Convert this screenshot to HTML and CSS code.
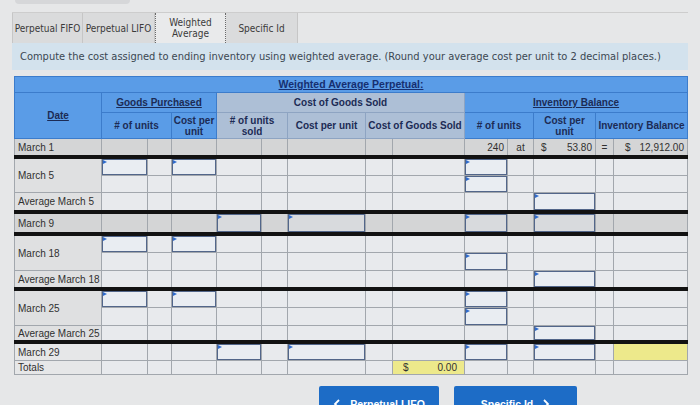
FILE: index.html
```html
<!DOCTYPE html>
<html>
<head>
<meta charset="utf-8">
<link rel="stylesheet" href="styles.css">
</head>
<body>
<div class="page">
  <div class="topfade"></div>
  <div class="tabs">
    <div class="tab">Perpetual FIFO</div>
    <div class="tab">Perpetual LIFO</div>
    <div class="tab active">Weighted<br>Average</div>
    <div class="tab">Specific Id</div>
  </div>
  <div class="instr">Compute the cost assigned to ending inventory using weighted average. (Round your average cost per unit to 2 decimal places.)</div>

  <table class="grid">
    <colgroup>
      <col class="w87"><col class="w46"><col class="w24"><col class="w45"><col class="w45"><col class="w26"><col class="w78"><col class="w27"><col class="w72"><col class="w43"><col class="w26"><col class="w62"><col class="w18"><col class="w74">
    </colgroup>
    <thead>
      <tr class="h15"><th colspan="14" class="title"><u>Weighted Average Perpetual:</u></th></tr>
      <tr class="h19">
        <th rowspan="2"><u>Date</u></th>
        <th colspan="3"><u>Goods Purchased</u></th>
        <th colspan="5" class="cg">Cost of Goods Sold</th>
        <th colspan="5"><u>Inventory Balance</u></th>
      </tr>
      <tr class="h25">
        <th colspan="2"># of units</th>
        <th>Cost per<br>unit</th>
        <th colspan="2" class="cg"># of units<br>sold</th>
        <th class="cg">Cost per unit</th>
        <th colspan="2" class="cg">Cost of Goods Sold</th>
        <th colspan="2"># of units</th>
        <th>Cost per<br>unit</th>
        <th colspan="2">Inventory Balance</th>
      </tr>
    </thead>
    <tbody>
      <tr class="h16 gray sep">
        <td class="d">March 1</td>
        <td></td><td></td><td></td><td></td><td></td><td></td><td></td><td></td>
        <td class="num">240</td>
        <td class="c">at</td>
        <td><div class="m pl6"><span>$</span><span>53.80</span></div></td>
        <td class="c">=</td>
        <td><div class="m pl10"><span>$</span><span>12,912.00</span></div></td>
      </tr>

      <tr class="h16">
        <td class="d" rowspan="2">March 5</td>
        <td class="in"><div class="box"></div></td><td></td><td class="in"><div class="box"></div></td>
        <td></td><td></td><td></td><td></td><td></td>
        <td class="in"><div class="box"></div></td><td></td><td></td><td></td><td></td>
      </tr>
      <tr class="h16">
        <td></td><td></td><td></td><td></td><td></td><td></td><td></td><td></td>
        <td class="in"><div class="box"></div></td><td></td><td></td><td></td><td></td>
      </tr>
      <tr class="h17 sep">
        <td class="d">Average March 5</td>
        <td></td><td></td><td></td><td></td><td></td><td></td><td></td><td></td><td></td><td></td>
        <td class="in"><div class="box"></div></td><td></td><td></td>
      </tr>

      <tr class="h18 gray sep">
        <td class="d">March 9</td>
        <td></td><td></td><td></td>
        <td class="in"><div class="box"></div></td><td></td>
        <td class="in"><div class="box"></div></td><td></td><td></td>
        <td class="in"><div class="box"></div></td><td></td>
        <td class="in"><div class="box"></div></td><td></td><td></td>
      </tr>

      <tr class="h16">
        <td class="d" rowspan="2">March 18</td>
        <td class="in"><div class="box"></div></td><td></td><td class="in"><div class="box"></div></td>
        <td></td><td></td><td></td><td></td><td></td><td></td><td></td><td></td><td></td><td></td>
      </tr>
      <tr class="h17">
        <td></td><td></td><td></td><td></td><td></td><td></td><td></td><td></td>
        <td class="in"><div class="box"></div></td><td></td><td></td><td></td><td></td>
      </tr>
      <tr class="h16 sep">
        <td class="d">Average March 18</td>
        <td></td><td></td><td></td><td></td><td></td><td></td><td></td><td></td><td></td><td></td>
        <td class="in"><div class="box"></div></td><td></td><td></td>
      </tr>

      <tr class="h16">
        <td class="d" rowspan="2">March 25</td>
        <td class="in"><div class="box"></div></td><td></td><td class="in"><div class="box"></div></td>
        <td></td><td></td><td></td><td></td><td></td>
        <td class="in"><div class="box"></div></td><td></td><td></td><td></td><td></td>
      </tr>
      <tr class="h17">
        <td></td><td></td><td></td><td></td><td></td><td></td><td></td><td></td>
        <td class="in"><div class="box"></div></td><td></td><td></td><td></td><td></td>
      </tr>
      <tr class="h14 sep">
        <td class="d">Average March 25</td>
        <td></td><td></td><td></td><td></td><td></td><td></td><td></td><td></td><td></td><td></td>
        <td class="in"><div class="box"></div></td><td></td><td></td>
      </tr>

      <tr class="h16">
        <td class="d lite">March 29</td>
        <td></td><td></td><td></td>
        <td class="in"><div class="box"></div></td><td></td>
        <td class="in"><div class="box"></div></td><td></td><td></td>
        <td class="in"><div class="box"></div></td><td></td>
        <td class="in"><div class="box"></div></td><td></td>
        <td class="yellow"></td>
      </tr>
      <tr class="h13">
        <td class="d lite">Totals</td>
        <td></td><td></td><td></td><td></td><td></td><td></td><td></td>
        <td class="yellow"><div class="m pl8"><span>$</span><span>0.00</span></div></td>
        <td></td><td></td><td></td><td></td><td></td>
      </tr>
    </tbody>
  </table>

  <div class="btns">
    <div class="btn b1">
      <svg width="7" height="10" viewBox="0 0 7 10"><path d="M6 1 L2 5 L6 9" fill="none" stroke="#fff" stroke-width="1.8"/></svg>
      <span>Perpetual LIFO</span>
    </div>
    <div class="btn b2">
      <span>Specific Id</span>
      <svg width="7" height="10" viewBox="0 0 7 10"><path d="M1 1 L5 5 L1 9" fill="none" stroke="#fff" stroke-width="1.8"/></svg>
    </div>
  </div>
</div>
</body>
</html>
```

FILE: styles.css
```css
html, body {
  margin: 0;
  height: 100%;
  overflow: hidden;
}
body {
  background: #e6e7e8;
  font-family: "Liberation Sans", Arial, sans-serif;
}
.page {
  padding: 0 12px;
}
.topfade {
  width: 115px;
  height: 4px;
  margin-left: 3px;
  background: #d6d7d9;
  border-radius: 0 0 5px 5px;
}
.tabs {
  display: flex;
  height: 30px;
  margin-top: 8px;
  border-top: 1px solid #cdcdcd;
}
.tab {
  display: flex;
  align-items: center;
  justify-content: center;
  text-align: center;
  width: 71px;
  font-family: "DejaVu Sans Condensed", "DejaVu Sans", sans-serif;
  font-size: 10px;
  line-height: 11px;
  color: #3a3a3a;
  background: #dadbdc;
  border-right: 1px solid #c6c6c6;
  box-sizing: border-box;
}
.tab:first-child { border-left: 1px solid #c6c6c6; }
.tab:nth-child(2) { width: 72px; }
.tab.active {
  width: 71px;
  background: #e9eaeb;
  border-left: 1px dotted #6a6a6a;
  border-right: 1px dotted #6a6a6a;
}
.tab:nth-child(4) { width: 72px; }
.instr {
  display: flex;
  align-items: center;
  height: 27px;
  padding-left: 8px;
  background: #d3e2ed;
  font-family: "DejaVu Sans Condensed", "DejaVu Sans", sans-serif;
  font-size: 11px;
  color: #3b4752;
}

.grid {
  margin: 6px 0 0 2px;
  border-collapse: collapse;
  table-layout: fixed;
  width: 673px;
}
.w87 { width: 87px; } .w46 { width: 46px; } .w24 { width: 24px; } .w45 { width: 45px; }
.w26 { width: 26px; } .w78 { width: 78px; } .w27 { width: 27px; } .w72 { width: 72px; }
.w43 { width: 43px; } .w62 { width: 62px; } .w18 { width: 18px; } .w74 { width: 74px; }

th {
  padding: 0;
  background: #5a9ce7;
  border: 1px solid #3c7ccb;
  color: #1c2b55;
  font-size: 10px;
  font-weight: bold;
  line-height: 11px;
  text-align: center;
  white-space: nowrap;
  overflow: hidden;
}
th.cg { background: #adbfd6; border-color: #8ea4c2; }
th.title {
  font-size: 10.5px;
  color: #162f70;
}

td {
  padding: 0 3px;
  background: #e8eaed;
  border: 1px solid #a2a7ad;
  color: #303030;
  font-size: 10px;
  line-height: 11px;
  white-space: nowrap;
  overflow: hidden;
}
td.d { background: #dfe0e1; padding-left: 3px; }
td.d.lite { background: #e6e7e8; }
tr.gray td { background: #d4d5d6; }
tr.sep td { border-bottom: 4px solid #121212; }
td.num { text-align: right; }
td.c { text-align: center; padding: 0; }
td.in { padding: 0; }
td.yellow { background: #ede98b; }
tr.gray td.in .box { background: #d8dadd; }

.m { display: flex; justify-content: space-between; }
.pl6 { padding-left: 4px; }
.pl8 { padding-left: 7px; padding-right: 4px; }
.pl10 { padding-left: 8px; }

.box {
  box-sizing: border-box;
  border: 1px solid #52668a;
  background: #e9edf2;
}
.box::before {
  content: "";
  display: block;
  width: 0;
  height: 0;
  border-left: 4px solid #2f6bcc;
  border-top: 2.5px solid transparent;
  border-bottom: 2.5px solid transparent;
}

.h13 td { height: 13px; } .h13 .box { height: 13px; }
.h14 td { height: 14px; } .h14 .box { height: 14px; }
.h15 th { height: 15px; }
.h16 td { height: 16px; } .h16 .box { height: 16px; }
.h17 td { height: 17px; } .h17 .box { height: 17px; }
.h18 td { height: 18px; } .h18 .box { height: 18px; }
.h19 th { height: 19px; }
.h25 th { height: 25px; }

.btns {
  display: flex;
  gap: 15px;
  margin: 11px 0 0 307px;
}
.btn {
  display: flex;
  align-items: center;
  justify-content: center;
  gap: 10px;
  height: 36px;
  background: #1d6cc6;
  color: #ffffff;
  font-size: 10.5px;
  font-weight: bold;
  border-radius: 2px;
}
.b1 { width: 120px; }
.b2 { width: 123px; }
```
